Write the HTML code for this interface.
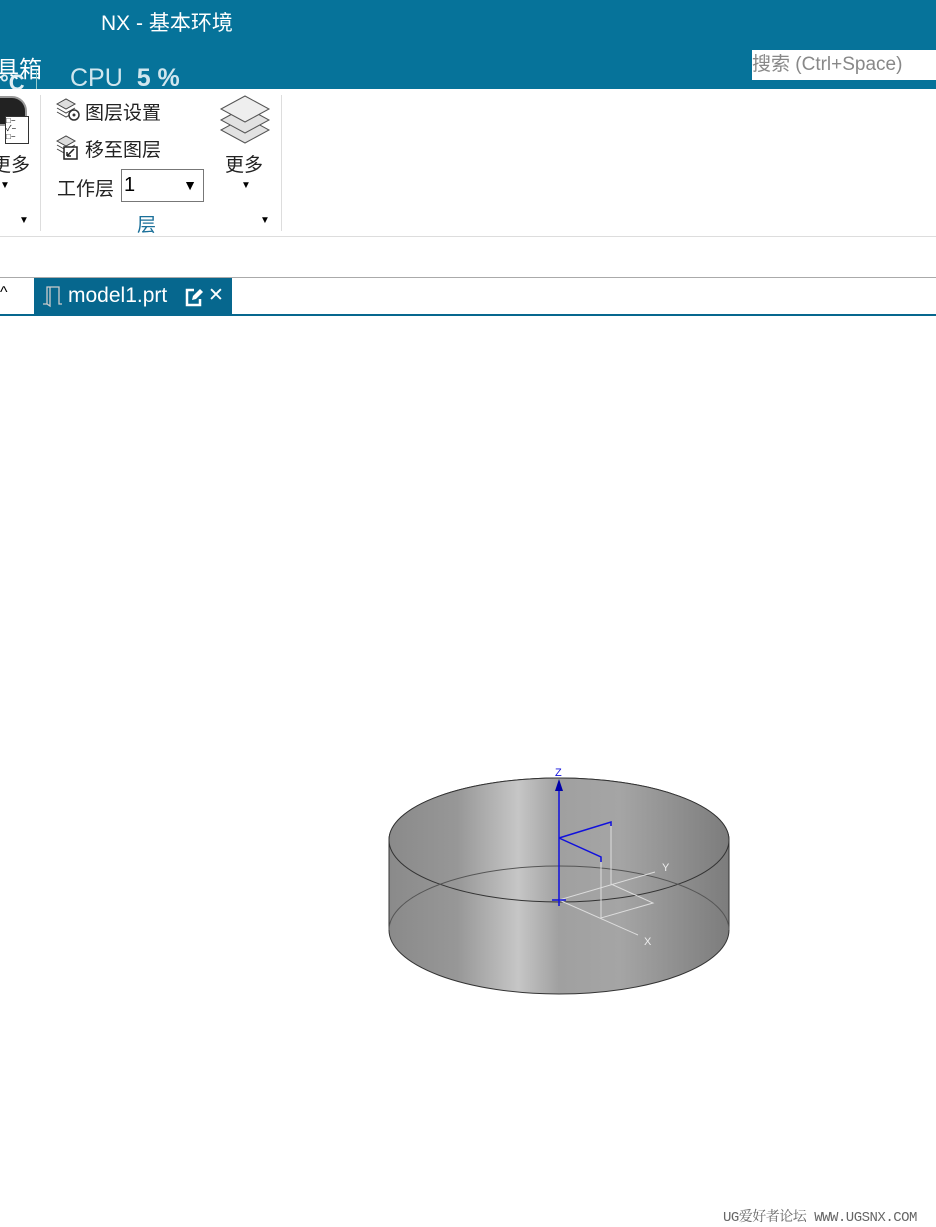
<!DOCTYPE html>
<html><head><meta charset="utf-8"><style>
body{margin:0;width:936px;height:1227px;background:#fff;position:relative;overflow:hidden;font-family:"Liberation Sans","Noto Sans CJK SC",sans-serif;}
.a{position:absolute;white-space:nowrap}
</style></head><body>
<div class="a" style="left:0;top:0;width:936px;height:89px;background:#06739a"></div>
<div class="a" style="left:101px;top:7px;font-size:21px;color:#fff">NX - 基本环境</div>
<div class="a" style="left:-4px;top:50px;font-size:23px;color:#fff">具箱</div>
<div class="a" style="left:0;top:70px;font-size:22px;color:#dfeef3;font-weight:bold;height:19px;overflow:hidden">°C</div>
<div class="a" style="left:36px;top:70px;width:1px;height:19px;background:#9cc"></div>
<div class="a" style="left:70px;top:64px;font-size:25px;color:#d0e6ee;height:25px;overflow:hidden">CPU&nbsp; <b>5 %</b></div>
<div class="a" style="left:752px;top:50px;width:184px;height:30px;background:#fff;font-size:19px;color:#888;line-height:30px">搜索 (Ctrl+Space)</div>
<div class="a" style="left:0;top:96px;width:27px;height:30px;border-radius:0 15px 0 0;background:#222;border:2px solid #999;border-left:none;box-sizing:border-box"></div>
<div class="a" style="left:5px;top:116px;width:22px;height:26px;background:#fff;border:1px solid #333;font-size:8px;line-height:8px">□−<br>✓−<br>□−</div>
<div class="a" style="left:-8px;top:150px;font-size:19px;color:#222">更多</div>
<div class="a" style="left:0;top:180px;font-size:10px">▼</div>
<div class="a" style="left:19px;top:215px;font-size:10px">▼</div>
<div class="a" style="left:40px;top:95px;width:1px;height:136px;background:#ddd"></div>
<div class="a" style="left:281px;top:95px;width:1px;height:136px;background:#ddd"></div>
<svg class="a" style="left:56px;top:98px" width="26" height="24"><g fill="#ddd" stroke="#444"><path d="M1 6l9-5 9 5-9 5z"/><path d="M1 10l9 5 9-5" fill="none"/><path d="M1 14l9 5 9-5" fill="none"/></g><circle cx="18" cy="17" r="5" fill="#fff" stroke="#333" stroke-width="1.5"/><circle cx="18" cy="17" r="1.5" fill="#333"/></svg>
<div class="a" style="left:85px;top:98px;font-size:19px;color:#222">图层设置</div>
<svg class="a" style="left:56px;top:135px" width="26" height="26"><g fill="#ddd" stroke="#444"><path d="M1 6l9-5 9 5-9 5z"/><path d="M1 10l9 5 9-5" fill="none"/><path d="M1 14l9 5 9-5" fill="none"/></g><rect x="8" y="12" width="13" height="12" fill="#fff" stroke="#222" stroke-width="1.5"/><path d="M11 21l7-7M11 21v-4M11 21h4" stroke="#222" stroke-width="1.5" fill="none"/></svg>
<div class="a" style="left:85px;top:135px;font-size:19px;color:#222">移至图层</div>
<div class="a" style="left:57px;top:174px;font-size:19px;color:#222">工作层</div>
<div class="a" style="left:121px;top:169px;width:79px;height:31px;border:1px solid #777;font-size:20px;line-height:31px;padding-left:2px">1<span style="position:absolute;right:6px;top:0;font-size:14px">▼</span></div>
<div class="a" style="left:137px;top:210px;font-size:19px;color:#1a6f99">层</div>
<div class="a" style="left:260px;top:215px;font-size:10px">▼</div>
<svg class="a" style="left:219px;top:95px" width="52" height="50"><g fill="#e2e2e2" stroke="#555"><path d="M2 35l24-13 24 13-24 13z"/><path d="M2 25l24-13 24 13-24 13z"/><path d="M2 14l24-13 24 13-24 13z" fill="#eee"/></g></svg>
<div class="a" style="left:225px;top:150px;font-size:19px;color:#222">更多</div>
<div class="a" style="left:241px;top:180px;font-size:10px">▼</div>
<div class="a" style="left:0;top:236px;width:936px;height:1px;background:#ddd"></div>
<div class="a" style="left:0;top:277px;width:936px;height:1px;background:#aaa"></div>
<div class="a" style="left:0;top:284px;font-size:16px">^</div>
<div class="a" style="left:34px;top:278px;width:198px;height:36px;background:#06678e"></div>
<svg class="a" style="left:40px;top:284px" width="24" height="24"><path d="M3 20h4V3h12v17h3M10 3v19l-3-2" stroke="#ccc" fill="none" stroke-width="1.3"/></svg>
<div class="a" style="left:68px;top:284px;font-size:21px;color:#fff">model1.prt</div>
<svg class="a" style="left:185px;top:287px" width="18" height="20"><path d="M9 3H2v15h13v-6" stroke="#fff" stroke-width="2.5" fill="none"/><path d="M7 13l1-4 7-7 3 3-7 7z" fill="#fff"/></svg>
<div class="a" style="left:208px;top:284px;font-size:19px;color:#fff">✕</div>
<div class="a" style="left:0;top:314px;width:936px;height:2px;background:#06678e"></div>
<svg class="a" style="left:0;top:0" width="936" height="1227">
<defs><linearGradient id="g" x1="389" x2="729" gradientUnits="userSpaceOnUse">
<stop offset="0" stop-color="#8a8a8a"/><stop offset=".2" stop-color="#979797"/><stop offset=".38" stop-color="#c6c6c6"/><stop offset=".5" stop-color="#a0a0a0"/><stop offset=".68" stop-color="#a5a5a5"/><stop offset=".85" stop-color="#8f8f8f"/><stop offset="1" stop-color="#7c7c7c"/></linearGradient></defs>
<path d="M389 840A170 62 0 0 1 729 840V930A170 64 0 0 1 389 930Z" fill="url(#g)" stroke="#333"/>
<ellipse cx="559" cy="840" rx="170" ry="62" fill="url(#g)" stroke="#333"/>
<path d="M389 930A170 64 0 0 1 729 930" fill="none" stroke="#555"/>
<g stroke="#ddd" fill="none"><path d="M559 838V900L655 872M559 900L638 935M611 822V884L653 903L601 918V857"/></g>
<g stroke="#1010dd" fill="none" stroke-width="1.5"><path d="M559 900V790M559 838L611 822V826M559 838L601 857V862M552 900H566M559 894V906"/></g>
<path d="M559 779l-4 12h8z" fill="#0000aa"/>
<text x="555" y="776" font-size="11" fill="#1010dd" font-family="Liberation Sans">Z</text>
<text x="662" y="871" font-size="11" fill="#eee" font-family="Liberation Sans">Y</text>
<text x="644" y="945" font-size="11" fill="#eee" font-family="Liberation Sans">X</text>
</svg>
<div class="a" style="left:723px;top:1206px;font-size:14px;color:#666;font-family:'Liberation Mono','Noto Serif CJK SC',monospace;letter-spacing:-0.5px">UG爱好者论坛 WWW.UGSNX.COM</div>
</body></html>
